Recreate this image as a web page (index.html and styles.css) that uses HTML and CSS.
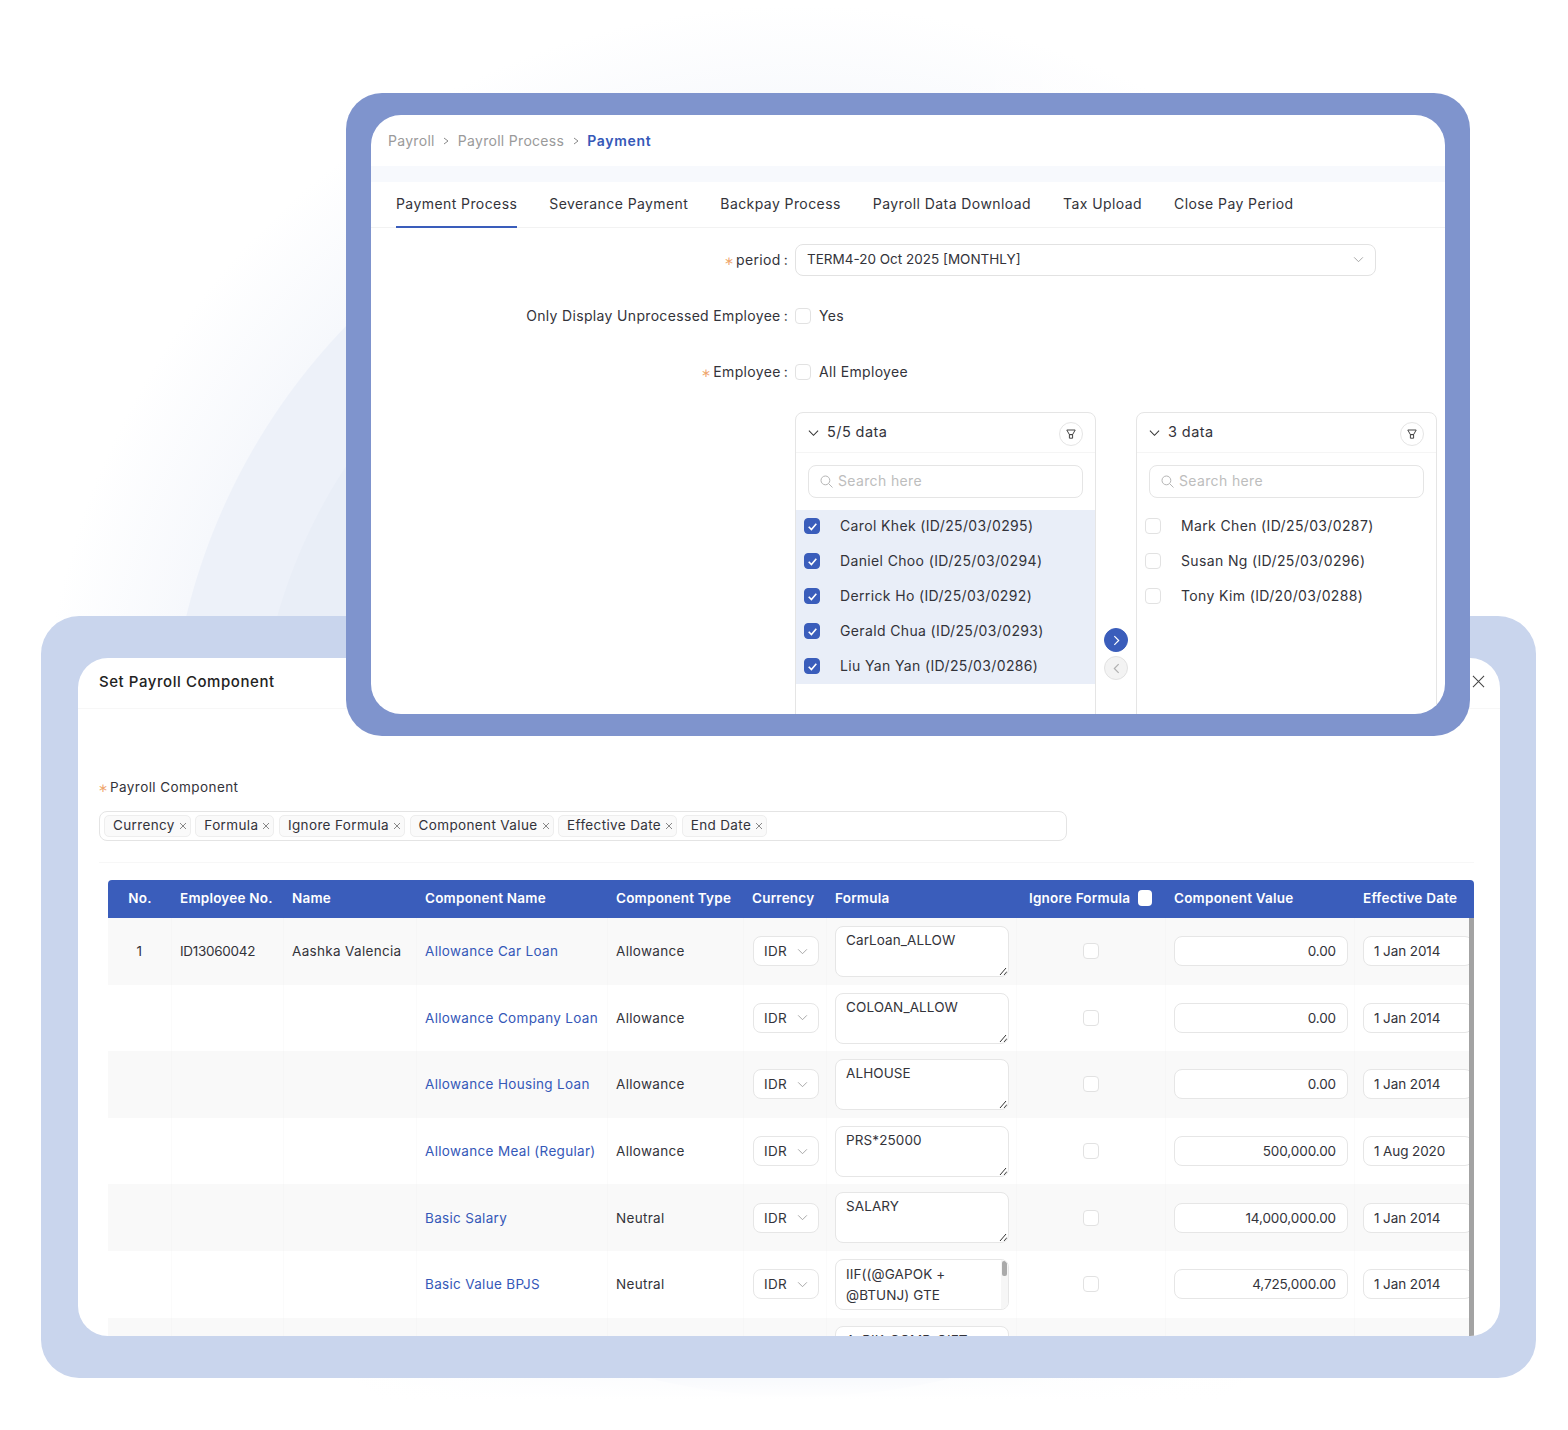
FILE: index.html
```html
<!DOCTYPE html>
<html lang="en">
<head>
<meta charset="utf-8">
<title>Payroll</title>
<link rel="stylesheet" href="styles.css">
</head>
<body>
<main class="stage">
  <section class="window window-back">
    <div class="sheet">
      <header class="dlg-head">
        <h2 class="dlg-title">Set Payroll Component</h2>
        <svg class="dlg-close" viewBox="0 0 14 14"><path d="M1 1l12 12M13 1L1 13"/></svg>
      </header>
      <div class="dlg-body">
        <div class="field-label"><span class="req">∗</span>Payroll Component</div>
        <div class="tagbox">
          <span class="tag">Currency<svg class="tag-x" viewBox="0 0 8 8"><path d="M1 1l6 6M7 1L1 7"/></svg></span>
          <span class="tag">Formula<svg class="tag-x" viewBox="0 0 8 8"><path d="M1 1l6 6M7 1L1 7"/></svg></span>
          <span class="tag">Ignore Formula<svg class="tag-x" viewBox="0 0 8 8"><path d="M1 1l6 6M7 1L1 7"/></svg></span>
          <span class="tag">Component Value<svg class="tag-x" viewBox="0 0 8 8"><path d="M1 1l6 6M7 1L1 7"/></svg></span>
          <span class="tag">Effective Date<svg class="tag-x" viewBox="0 0 8 8"><path d="M1 1l6 6M7 1L1 7"/></svg></span>
          <span class="tag">End Date<svg class="tag-x" viewBox="0 0 8 8"><path d="M1 1l6 6M7 1L1 7"/></svg></span>
        </div>
        <hr class="soft-rule">
        <div class="table">
          <div class="t-row t-head">
            <div class="c-center">No.</div><div>Employee No.</div><div>Name</div><div>Component Name</div><div>Component Type</div><div>Currency</div><div>Formula</div><div class="c-ignore">Ignore Formula<span class="head-check"></span></div><div>Component Value</div><div>Effective Date</div>
          </div>
          <div class="t-row odd">
            <div class="c-center">1</div><div class="tight">ID13060042</div><div>Aashka Valencia</div><div class="link">Allowance Car Loan</div><div>Allowance</div>
            <div><span class="mini-select">IDR<svg class="chev" viewBox="0 0 12 8"><path d="M1 1.5l5 5 5-5"/></svg></span></div>
            <div><div class="area">CarLoan_ALLOW<svg class="grip" viewBox="0 0 8 8"><path d="M1 8l6-7M5 8l3-3.5"/></svg></div></div>
            <div class="c-check"><span class="box"></span></div>
            <div><span class="num">0.00</span></div>
            <div><span class="date">1 Jan 2014</span></div>
          </div>
          <div class="t-row">
            <div></div><div></div><div></div><div class="link">Allowance Company Loan</div><div>Allowance</div>
            <div><span class="mini-select">IDR<svg class="chev" viewBox="0 0 12 8"><path d="M1 1.5l5 5 5-5"/></svg></span></div>
            <div><div class="area">COLOAN_ALLOW<svg class="grip" viewBox="0 0 8 8"><path d="M1 8l6-7M5 8l3-3.5"/></svg></div></div>
            <div class="c-check"><span class="box"></span></div>
            <div><span class="num">0.00</span></div>
            <div><span class="date">1 Jan 2014</span></div>
          </div>
          <div class="t-row odd">
            <div></div><div></div><div></div><div class="link">Allowance Housing Loan</div><div>Allowance</div>
            <div><span class="mini-select">IDR<svg class="chev" viewBox="0 0 12 8"><path d="M1 1.5l5 5 5-5"/></svg></span></div>
            <div><div class="area">ALHOUSE<svg class="grip" viewBox="0 0 8 8"><path d="M1 8l6-7M5 8l3-3.5"/></svg></div></div>
            <div class="c-check"><span class="box"></span></div>
            <div><span class="num">0.00</span></div>
            <div><span class="date">1 Jan 2014</span></div>
          </div>
          <div class="t-row">
            <div></div><div></div><div></div><div class="link">Allowance Meal (Regular)</div><div>Allowance</div>
            <div><span class="mini-select">IDR<svg class="chev" viewBox="0 0 12 8"><path d="M1 1.5l5 5 5-5"/></svg></span></div>
            <div><div class="area">PRS*25000<svg class="grip" viewBox="0 0 8 8"><path d="M1 8l6-7M5 8l3-3.5"/></svg></div></div>
            <div class="c-check"><span class="box"></span></div>
            <div><span class="num">500,000.00</span></div>
            <div><span class="date">1 Aug 2020</span></div>
          </div>
          <div class="t-row odd">
            <div></div><div></div><div></div><div class="link">Basic Salary</div><div>Neutral</div>
            <div><span class="mini-select">IDR<svg class="chev" viewBox="0 0 12 8"><path d="M1 1.5l5 5 5-5"/></svg></span></div>
            <div><div class="area">SALARY<svg class="grip" viewBox="0 0 8 8"><path d="M1 8l6-7M5 8l3-3.5"/></svg></div></div>
            <div class="c-check"><span class="box"></span></div>
            <div><span class="num">14,000,000.00</span></div>
            <div><span class="date">1 Jan 2014</span></div>
          </div>
          <div class="t-row">
            <div></div><div></div><div></div><div class="link">Basic Value BPJS</div><div>Neutral</div>
            <div><span class="mini-select">IDR<svg class="chev" viewBox="0 0 12 8"><path d="M1 1.5l5 5 5-5"/></svg></span></div>
            <div><div class="area area-scroll">IIF((@GAPOK +<br>@BTUNJ) GTE<span class="area-track"><span class="area-thumb"></span></span></div></div>
            <div class="c-check"><span class="box"></span></div>
            <div><span class="num">4,725,000.00</span></div>
            <div><span class="date">1 Jan 2014</span></div>
          </div>
          <div class="t-row odd">
            <div></div><div></div><div></div><div></div><div></div><div></div>
            <div><div class="area">A_BIK_COMP_GIFT</div></div>
            <div></div><div></div><div></div>
          </div>
          <span class="t-scroll"></span>
        </div>
      </div>
    </div>
  </section>

  <section class="window window-front">
    <div class="sheet">
      <nav class="crumbs">
        <span>Payroll</span><svg class="crumb-sep" viewBox="0 0 6 8"><path d="M1 1l4 3-4 3"/></svg>
        <span>Payroll Process</span><svg class="crumb-sep" viewBox="0 0 6 8"><path d="M1 1l4 3-4 3"/></svg>
        <span class="crumb-now">Payment</span>
      </nav>
      <div class="band"></div>
      <div class="tabs">
        <span class="tab tab-on">Payment Process</span>
        <span class="tab">Severance Payment</span>
        <span class="tab">Backpay Process</span>
        <span class="tab">Payroll Data Download</span>
        <span class="tab">Tax Upload</span>
        <span class="tab">Close Pay Period</span>
      </div>
      <form class="form">
        <div class="form-row">
          <label class="form-label"><span class="req">∗</span>period<i>:</i></label>
          <div class="select">TERM4-20 Oct 2025 [MONTHLY]<svg class="chev" viewBox="0 0 12 8"><path d="M1 1.5l5 5 5-5"/></svg></div>
        </div>
        <div class="form-row">
          <label class="form-label">Only Display Unprocessed Employee<i>:</i></label>
          <div class="check-line"><span class="box"></span><span class="check-text">Yes</span></div>
        </div>
        <div class="form-row">
          <label class="form-label"><span class="req">∗</span>Employee<i>:</i></label>
          <div class="check-line"><span class="box"></span><span class="check-text">All Employee</span></div>
        </div>
        <div class="transfer">
          <div class="panel">
            <div class="panel-head">
              <svg class="panel-chev" viewBox="0 0 12 8"><path d="M1 1.5l5 5 5-5"/></svg><span>5/5 data</span>
              <span class="funnel"><svg viewBox="0 0 10 10"><path d="M.8 1h8.4L6.6 5.6H3.4zM3.4 5.6h3.2v3.6H3.4z"/></svg></span>
            </div>
            <div class="search"><svg viewBox="0 0 13 13"><circle cx="5.4" cy="5.4" r="4.4"/><path d="M8.6 8.6l3.9 3.9"/></svg>Search here</div>
            <ul class="items items-on">
              <li><span class="box on"><svg viewBox="0 0 12 12"><path d="M2.5 6.2l2.5 2.6 4.5-5.3"/></svg></span>Carol Khek (ID/25/03/0295)</li>
              <li><span class="box on"><svg viewBox="0 0 12 12"><path d="M2.5 6.2l2.5 2.6 4.5-5.3"/></svg></span>Daniel Choo (ID/25/03/0294)</li>
              <li><span class="box on"><svg viewBox="0 0 12 12"><path d="M2.5 6.2l2.5 2.6 4.5-5.3"/></svg></span>Derrick Ho (ID/25/03/0292)</li>
              <li><span class="box on"><svg viewBox="0 0 12 12"><path d="M2.5 6.2l2.5 2.6 4.5-5.3"/></svg></span>Gerald Chua (ID/25/03/0293)</li>
              <li><span class="box on"><svg viewBox="0 0 12 12"><path d="M2.5 6.2l2.5 2.6 4.5-5.3"/></svg></span>Liu Yan Yan (ID/25/03/0286)</li>
            </ul>
          </div>
          <div class="movers">
            <span class="move move-on"><svg viewBox="0 0 8 12"><path d="M2 2l4 4-4 4"/></svg></span>
            <span class="move"><svg viewBox="0 0 8 12"><path d="M6 2L2 6l4 4"/></svg></span>
          </div>
          <div class="panel">
            <div class="panel-head">
              <svg class="panel-chev" viewBox="0 0 12 8"><path d="M1 1.5l5 5 5-5"/></svg><span>3 data</span>
              <span class="funnel"><svg viewBox="0 0 10 10"><path d="M.8 1h8.4L6.6 5.6H3.4zM3.4 5.6h3.2v3.6H3.4z"/></svg></span>
            </div>
            <div class="search"><svg viewBox="0 0 13 13"><circle cx="5.4" cy="5.4" r="4.4"/><path d="M8.6 8.6l3.9 3.9"/></svg>Search here</div>
            <ul class="items">
              <li><span class="box"></span>Mark Chen (ID/25/03/0287)</li>
              <li><span class="box"></span>Susan Ng (ID/25/03/0296)</li>
              <li><span class="box"></span>Tony Kim (ID/20/03/0288)</li>
            </ul>
          </div>
        </div>
      </form>
    </div>
  </section>
</main>
</body>
</html>
```
FILE: styles.css
```css
* { box-sizing: border-box; }
html, body { margin: 0; padding: 0; background: #fff; }
body {
  font-family: Inter, "Noto Sans", "Liberation Sans", sans-serif;
  color: #33333a;
  font-size: 14px;
  letter-spacing: .42px;
}
.stage {
  position: relative;
  width: 1568px;
  height: 1430px;
  overflow: hidden;
  background:
    linear-gradient(to bottom, rgba(255,255,255,0) 1340px, #fff 1400px),
    linear-gradient(to right, rgba(255,255,255,0) 900px, #fff 1470px),
    radial-gradient(circle at 800px 765px, #e9eef7 0, #e9eef7 543px, #edf1f9 544px, #edf1f9 631px, #f6f8fc 632px, #fff 760px);
}
.window { position: absolute; }
.window-back {
  left: 41px; top: 616px; width: 1495px; height: 762px;
  padding: 42px 36px 42px 37px;
  background: #c9d5ed;
  border-radius: 38px;
}
.window-front {
  left: 346px; top: 93px; width: 1124px; height: 643px;
  padding: 22px 25px;
  background: #7f94cd;
  border-radius: 36px;
}
.sheet {
  height: 100%;
  background: #fff;
  overflow: hidden;
  border-radius: 30px;
}

/* back dialog */
.dlg-head {
  display: flex;
  align-items: center;
  justify-content: space-between;
  height: 51px;
  padding: 0 15px 4px 21px;
  border-bottom: 1px solid #f7f7f7;
}
.dlg-title { margin: 0; font-size: 15px; font-weight: 500; color: #222; letter-spacing: .56px; }
.dlg-close { width: 13px; height: 13px; fill: none; stroke: #444; stroke-width: 1.1; }
.dlg-body { padding: 68px 26px 0 21px; }
.field-label { height: 20px; font-size: 13.5px; line-height: 20px; }
.req { display: inline-block; width: 8px; margin: 0 4px 0 -1px; color: #efa56c; font-size: 12px; line-height: 1; text-align: left; letter-spacing: 0; }
.tagbox {
  display: flex;
  gap: 4.6px;
  align-items: center;
  width: 968px;
  height: 30px;
  margin-top: 14px;
  padding: 0 4px;
  border: 1px solid #e4e4e4;
  border-radius: 8px;
}
.tag {
  display: inline-flex;
  align-items: center;
  gap: 4px;
  height: 22px;
  padding: 0 3px 2px 8px;
  background: #fafafa;
  border: 1px solid #eee;
  border-radius: 5px;
  font-size: 13.5px;
  letter-spacing: .36px;
  white-space: nowrap;
}
.tag-x { width: 8px; height: 8px; margin-top: 2px; fill: none; stroke: #888; stroke-width: 1; }
.soft-rule { margin: 21px 0 0; border: 0; border-top: 1px solid #f7f7f7; }

.table {
  position: relative;
  width: 1366px;
  margin: 17px 0 0 9px;
  font-size: 13.5px;
  letter-spacing: .32px;
}
.t-row {
  display: grid;
  grid-template-columns: 64px 112px 133px 191px 136px 83px 190px 149px 189px 119px;
  height: 66.6px;
  align-items: center;
  white-space: nowrap;
}
.t-row > div { padding-left: 8px; height: 100%; display: flex; align-items: center; border-right: 1px solid #fbfbfb; overflow: hidden; }
.t-row.odd { background: #f9f9f9; }
.t-row.odd > div { border-right-color: #f6f6f6; }
.t-head {
  height: 38px;
  background: #3a5dbb;
  color: #fff;
  font-weight: 600;
  letter-spacing: .22px;
  border-radius: 4px 4px 0 0;
  overflow: hidden;
}
.t-row.t-head > div { border: 0; padding-bottom: 2px; }
.t-row > div.c-center { justify-content: center; padding-left: 0; }
.t-row > div.c-ignore { gap: 8px; padding-left: 12px; }
.t-row > div.tight { letter-spacing: -.3px; }
.head-check { width: 14px; height: 16px; background: #fff; border-radius: 4px; }
.link { color: #3558b8; }
.mini-select {
  display: flex;
  align-items: center;
  justify-content: space-between;
  width: 66px;
  height: 30px;
  margin-left: 1px;
  padding: 0 10px;
  background: #fff;
  border: 1px solid #e6e6e6;
  border-radius: 8px;
}
.chev { width: 11px; height: 7px; fill: none; stroke: #9c9c9c; stroke-width: 1; }
.area {
  position: relative;
  width: 174px;
  height: 51px;
  padding: 3px 10px;
  line-height: 21px;
  letter-spacing: .1px;
  background: #fff;
  border: 1px solid #e6e6e6;
  border-radius: 8px;
  overflow: hidden;
  align-self: flex-start;
  margin-top: 8px;
}
.grip { position: absolute; right: 1px; bottom: 1px; width: 8px; height: 8px; fill: none; stroke: #333; stroke-width: 1; }
.area-track { position: absolute; right: 0; top: 0; bottom: 0; width: 7px; background: #f6f6f6; }
.area-thumb { display: block; width: 5px; height: 15px; margin: 1px auto 0; background: #aaa; border-radius: 2px; }
.area-scroll { padding-top: 4px; }
.t-row > div.c-check { justify-content: center; padding-left: 0; }
.box {
  display: inline-flex;
  flex: none;
  align-items: center;
  justify-content: center;
  width: 16px;
  height: 16px;
  background: #fff;
  border: 1px solid #e2e2e2;
  border-radius: 4px;
}
.box.on { background: #3a5dbb; border-color: #3a5dbb; }
.box svg { width: 13px; height: 13px; fill: none; stroke: #fff; stroke-width: 1.5; }
.num, .date {
  display: flex;
  align-items: center;
  height: 30px;
  background: #fff;
  border: 1px solid #e6e6e6;
  border-radius: 8px;
  letter-spacing: -.1px;
}
.num { width: 174px; padding: 0 11px; justify-content: flex-end; }
.date { width: 130px; padding: 0 10px; }
.t-scroll { position: absolute; right: 0; top: 38px; bottom: 0; width: 5px; background: #a3a3a3; }

/* front window */
.crumbs {
  display: flex;
  align-items: center;
  gap: 8.5px;
  height: 51px;
  padding: 0 0 0 17px;
  color: #9a9a9a;
  font-size: 14px;
  letter-spacing: .3px;
}
.crumb-sep { width: 6px; height: 8px; fill: none; stroke: #888; stroke-width: 1; }
.crumb-now { color: #3558b8; font-weight: 600; letter-spacing: .7px; }
.band { height: 16px; background: #f7f9fd; }
.tabs {
  display: flex;
  gap: 32px;
  height: 46px;
  padding-left: 25px;
  border-bottom: 1px solid #f2f2f2;
}
.tab { display: flex; align-items: center; height: 46px; padding-bottom: 3px; white-space: nowrap; }
.tab-on { border-bottom: 2px solid #3a5dbb; padding-bottom: 1px; }
.form { padding-top: 16px; }
.form-row {
  display: grid;
  grid-template-columns: 417px 1fr;
  gap: 7px;
  align-items: center;
  height: 32px;
  margin-bottom: 24px;
  font-size: 14px;
  letter-spacing: .33px;
}
.form-label { text-align: right; padding-bottom: 1px; }
.form-label i { font-style: normal; margin-left: 3px; }
.select {
  display: flex;
  align-items: center;
  justify-content: space-between;
  width: 581px;
  height: 32px;
  padding: 0 11px 2px;
  font-size: 13.5px;
  letter-spacing: 0;
  border: 1px solid #e2e2e2;
  border-radius: 8px;
}
.check-line { display: flex; align-items: center; gap: 8px; }
.check-text { padding-bottom: 2px; }
.transfer {
  display: flex;
  margin: 0 0 0 424px;
  height: 320px;
}
.panel {
  width: 301px;
  border: 1px solid #e5e5e5;
  border-radius: 8px 8px 0 0;
}
.panel-head {
  display: flex;
  align-items: center;
  height: 40px;
  padding: 0 12px;
  border-bottom: 1px solid #f5f5f5;
  font-size: 14.5px;
}
.panel-head > span:nth-child(2) { padding-bottom: 3px; }
.panel-chev { width: 11px; height: 8px; margin-right: 8px; fill: none; stroke: #333; stroke-width: 1.1; }
.funnel {
  display: flex;
  align-items: center;
  justify-content: center;
  width: 24px;
  height: 24px;
  margin-left: auto;
  margin-top: 3px;
  border: 1px solid #e5e5e5;
  border-radius: 50%;
}
.funnel svg { width: 10px; height: 10px; fill: none; stroke: #444; stroke-width: 1; }
.search {
  display: flex;
  align-items: center;
  gap: 5px;
  height: 33px;
  margin: 12px 12px;
  padding: 0 11px 3px;
  color: #bdbdbd;
  border: 1px solid #e5e5e5;
  border-radius: 8px;
  font-size: 14px;
  letter-spacing: .36px;
}
.search svg { width: 13px; height: 13px; margin-top: 2px; fill: none; stroke: #b5b5b5; stroke-width: 1; }
.items { list-style: none; margin: 0; padding: 0; font-size: 14px; letter-spacing: .36px; }
.items li { display: flex; align-items: center; gap: 20px; height: 35px; padding: 0 0 5px 8px; }
.items .box { margin-top: 2px; }
.items-on { height: 174px; background: #e9eef8; }
.movers { display: flex; flex-direction: column; align-items: center; gap: 4px; width: 40px; padding-top: 216px; }
.move {
  display: flex;
  align-items: center;
  justify-content: center;
  width: 24px;
  height: 24px;
  background: #f3f3f3;
  border: 1px solid #e2e2e2;
  border-radius: 50%;
}
.move svg { width: 9px; height: 13px; fill: none; stroke: #b0b0b0; stroke-width: 1.1; }
.move-on { background: #3a5dbb; border-color: #3a5dbb; }
.move-on svg { stroke: #fff; }
```
